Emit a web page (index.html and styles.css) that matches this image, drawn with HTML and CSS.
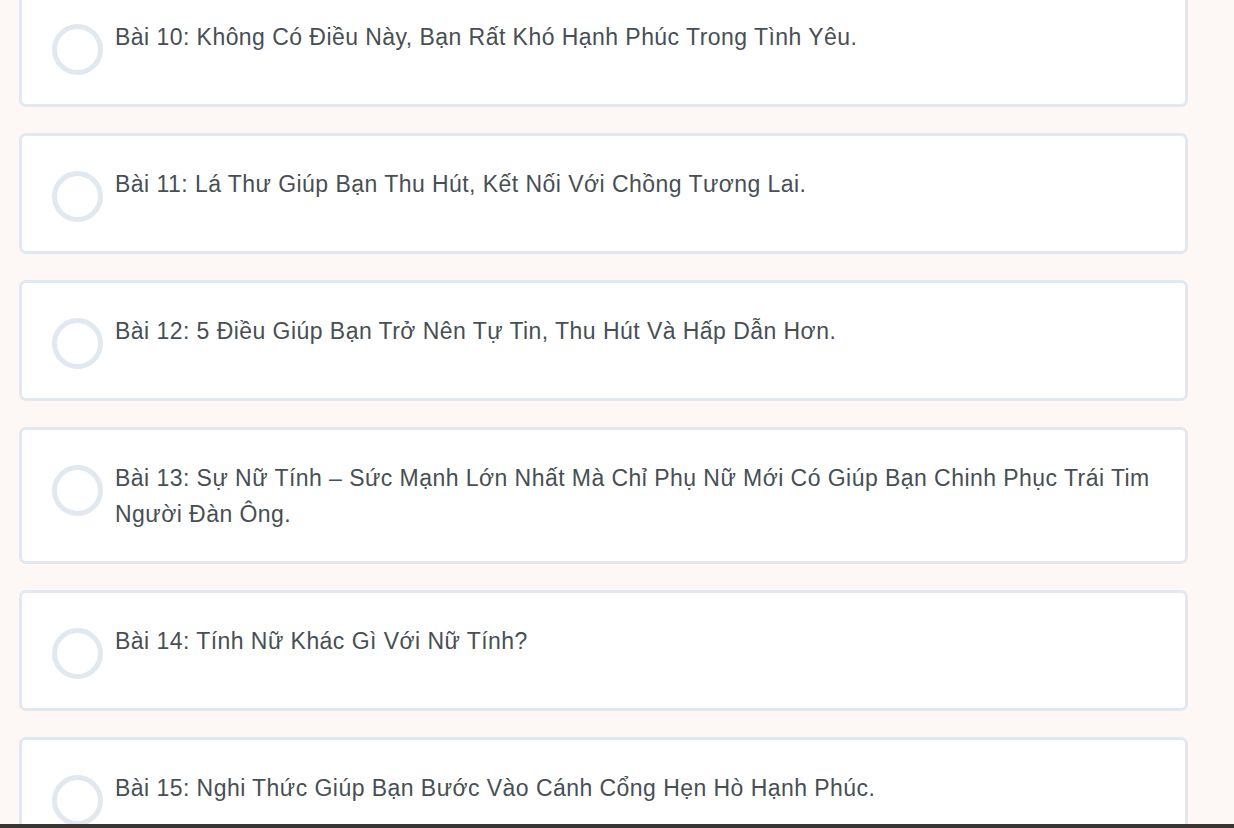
FILE: index.html
```html
<!DOCTYPE html>
<html lang="vi">
<head>
<meta charset="utf-8">
<title>Bài học</title>
<link rel="stylesheet" href="styles.css">
</head>
<body>
<main class="lessons">
  <div class="lesson">
    <span class="check"></span>
    <p class="title">Bài 10: Không Có Điều Này, Bạn Rất Khó Hạnh Phúc Trong Tình Yêu.</p>
  </div>
  <div class="lesson">
    <span class="check"></span>
    <p class="title">Bài 11: Lá Thư Giúp Bạn Thu Hút, Kết Nối Với Chồng Tương Lai.</p>
  </div>
  <div class="lesson">
    <span class="check"></span>
    <p class="title">Bài 12: 5 Điều Giúp Bạn Trở Nên Tự Tin, Thu Hút Và Hấp Dẫn Hơn.</p>
  </div>
  <div class="lesson">
    <span class="check"></span>
    <p class="title">Bài 13: Sự Nữ Tính – Sức Mạnh Lớn Nhất Mà Chỉ Phụ Nữ Mới Có Giúp Bạn Chinh Phục Trái Tim Người Đàn Ông.</p>
  </div>
  <div class="lesson">
    <span class="check"></span>
    <p class="title">Bài 14: Tính Nữ Khác Gì Với Nữ Tính?</p>
  </div>
  <div class="lesson">
    <span class="check"></span>
    <p class="title">Bài 15: Nghi Thức Giúp Bạn Bước Vào Cánh Cổng Hẹn Hò Hạnh Phúc.</p>
  </div>
</main>
<div class="bottom-bar"></div>
</body>
</html>
```

FILE: styles.css
```css
html, body {
  margin: 0;
  padding: 0;
  background: #fdf8f5;
  height: 828px;
  overflow: hidden;
}

body {
  font-family: "Liberation Sans", Arial, sans-serif;
  color: #474f54;
}

.lessons {
  display: flex;
  flex-direction: column;
  gap: 26px;
  width: 1169px;
  margin: -14px 0 0 19px;
}

.lesson {
  display: flex;
  align-items: flex-start;
  gap: 12px;
  background: #ffffff;
  border: 3px solid #e2e8f0;
  border-radius: 7px;
  padding: 29px 29px 29px 30px;
}

.check {
  flex: 0 0 auto;
  box-sizing: border-box;
  width: 51px;
  height: 51px;
  margin-top: 6px;
  border: 5px solid #e2e8f0;
  border-radius: 50%;
}

.title {
  margin: 0;
  padding-top: 1px;
  font-size: 23px;
  line-height: 36px;
  letter-spacing: 0.45px;
}

.bottom-bar {
  position: fixed;
  left: 0;
  right: 0;
  bottom: 0;
  height: 4px;
  background: #3a3432;
}
```
